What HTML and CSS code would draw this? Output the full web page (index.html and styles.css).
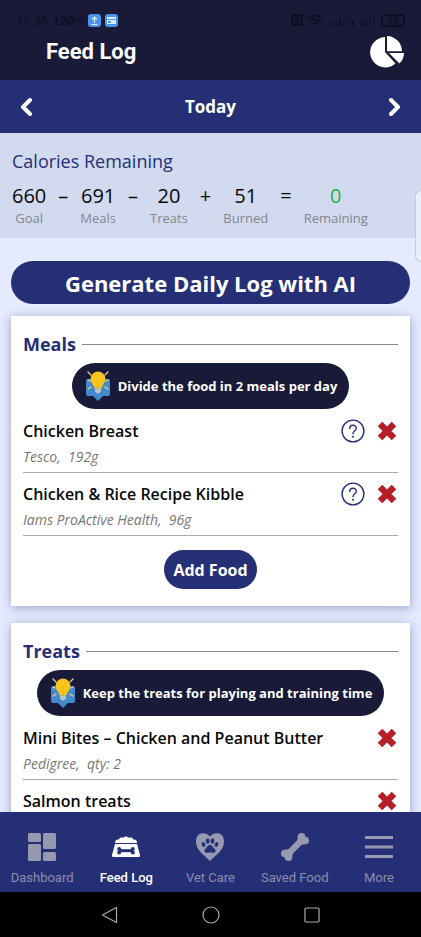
FILE: index.html
```html
<!DOCTYPE html>
<html lang="en">
<head>
<meta charset="utf-8">
<meta name="viewport" content="width=device-width, initial-scale=1">
<title>Feed Log</title>
<link rel="stylesheet" href="styles.css">
</head>
<body>
<svg class="defs" aria-hidden="true">
  <symbol id="tip" viewBox="0 0 28 32">
    <path fill="#4389cb" d="M4 9h20a2 2 0 0 1 2 2v13a2 2 0 0 1-2 2h-5l-5 5-5-5H4a2 2 0 0 1-2-2V11a2 2 0 0 1 2-2z"/>
    <path stroke="#ead89a" stroke-width="1.200" stroke-linecap="round" d="M4 2l3 3M24 2l-3 3M4 10l2 1M24 10l-2 1M4 19l3-2M24 19l-3-2"/>
    <path fill="#f9c51b" d="M14 1.500a7.500 7.500 0 0 0-7.500 7.500c0 4 3.500 5.500 4 9.500h7c.5-4 4-5.500 4-9.500a7.500 7.500 0 0 0-7.500-7.500z"/>
    <path fill="#eeb010" d="M13.500 10h1v8h-1z"/>
    <path fill="#b7c4c4" d="M11 18.500h6v3l-2 2h-2l-2-2z"/>
  </symbol>
  <symbol id="cross" viewBox="0 0 20 20">
    <path fill="none" stroke="#b71f28" stroke-width="6.400" stroke-linejoin="round" d="M3 3l14 14M17 3L3 17"/>
  </symbol>
  <symbol id="help" viewBox="0 0 24 24">
    <g fill="none" stroke="#252f75" stroke-width="1.400" stroke-linecap="round"><circle cx="12" cy="12" r="10.900"/><path d="M8.700 9.500c0-4.300 6.600-4.200 6.600-.2 0 2.600-3.300 2.500-3.300 5.500"/></g>
    <circle cx="12" cy="17.700" r="1" fill="#252f75"/>
  </symbol>
</svg>

<header class="top">
  <div class="status">
    <div class="status-side">
      <span>16:36</span><span class="rate">120<span class="hz">Hz</span></span>
      <svg width="13" height="13" viewBox="0 0 13 13"><rect width="13" height="13" rx="3" fill="#4d93ee"/><path d="M6.500 9V3M4 5.500L6.500 3 9 5.500M3.500 10.500h6" fill="none" stroke="#d9f0ff" stroke-width="1.200"/></svg>
      <svg width="13" height="13" viewBox="0 0 13 13"><rect width="13" height="13" rx="3" fill="#4d93ee"/><path d="M2 3h9v2H2zM2 6h9v4H2z" fill="#d9f0ff"/><path d="M3 7h3v2H3z" fill="#4d93ee"/></svg>
    </div>
    <div class="status-side">
      <svg width="12" height="12" viewBox="0 0 12 12"><rect width="12" height="12" rx="2" fill="#0d0e24"/><path d="M3 10V3l6 6V2" fill="none" stroke="#181a38" stroke-width="1.300"/></svg>
      <svg width="16" height="12" viewBox="0 0 16 12"><g fill="none" stroke="#0d0e24" stroke-width="1.600"><path d="M1 4.500q7-6 14 0M3.500 7.300q4.500-4 9 0M6 9.800q2-2 4 0"/></g><circle cx="8" cy="11" r="1" fill="#0d0e24"/></svg>
      <svg width="29" height="12" viewBox="0 0 29 12"><path fill="#0d0e24" d="M4 9h2v3H4zM8 7h2v5H8zM12 4h2v8h-2zM24 7h3v5h-3z"/><path fill="#121430" d="M16 2h2v10h-2zM20 0h1v12h-1z"/></svg>
      <svg width="17" height="12" viewBox="0 0 17 12"><path fill="#0d0e24" d="M1 9h2v3H1zM5 7h2v5H5z"/><path fill="#121430" d="M9 4h2v8H9zM13 0h2v12h-2z"/></svg>
      <span class="battery">59</span>
    </div>
  </div>
  <div class="title-row">
    <h1>Feed Log</h1>
    <button class="plain" aria-label="Nutrition chart">
      <svg width="36" height="32" viewBox="0 0 36 32"><path fill="#fff" d="M16 16V1A15.200 15.200 0 1 0 26.500 27.500zM18 0a15.500 15.500 0 0 1 15 15.200H18zM20 17h15a15 15 0 0 1-4.500 10.500z"/></svg>
    </button>
  </div>
</header>

<nav class="date" aria-label="Day">
  <button class="plain" aria-label="Previous day"><svg width="12" height="20" viewBox="0 0 12 20"><path d="M10 3L3 10l7 7"/></svg></button>
  <h2>Today</h2>
  <button class="plain" aria-label="Next day"><svg width="12" height="20" viewBox="0 0 12 20"><path d="M2 3l7 7-7 7"/></svg></button>
</nav>

<main>
  <section class="summary">
    <h2>Calories Remaining</h2>
    <div class="sum">
      <div class="term"><b>660</b><span>Goal</span></div>
      <i>–</i>
      <div class="term"><b>691</b><span>Meals</span></div>
      <i>–</i>
      <div class="term"><b>20</b><span>Treats</span></div>
      <i>+</i>
      <div class="term"><b>51</b><span>Burned</span></div>
      <i>=</i>
      <div class="term result"><b>0</b><span>Remaining</span></div>
    </div>
    <div class="edge"></div>
  </section>

  <div class="content">
    <button class="generate">Generate Daily Log with AI</button>

    <section class="card">
      <h2>Meals</h2>
      <p class="tip"><svg width="28" height="32"><use href="#tip"/></svg>Divide the food in 2 meals per day</p>
      <ul>
        <li>
          <div class="row"><h3>Chicken Breast</h3><button class="plain" aria-label="About Chicken Breast"><svg width="24" height="24"><use href="#help"/></svg></button><button class="plain" aria-label="Remove Chicken Breast"><svg width="20" height="20"><use href="#cross"/></svg></button></div>
          <p class="detail">Tesco,&nbsp; 192g</p>
        </li>
        <li>
          <div class="row"><h3>Chicken &amp; Rice Recipe Kibble</h3><button class="plain" aria-label="About Chicken &amp; Rice Recipe Kibble"><svg width="24" height="24"><use href="#help"/></svg></button><button class="plain" aria-label="Remove Chicken &amp; Rice Recipe Kibble"><svg width="20" height="20"><use href="#cross"/></svg></button></div>
          <p class="detail">Iams ProActive Health,&nbsp; 96g</p>
        </li>
      </ul>
      <button class="add">Add Food</button>
    </section>

    <section class="card">
      <h2>Treats</h2>
      <p class="tip"><svg width="28" height="32"><use href="#tip"/></svg>Keep the treats for playing and training time</p>
      <ul>
        <li>
          <div class="row"><h3>Mini Bites – Chicken and Peanut Butter</h3><button class="plain" aria-label="Remove Mini Bites"><svg width="20" height="20"><use href="#cross"/></svg></button></div>
          <p class="detail">Pedigree,&nbsp; qty: 2</p>
        </li>
        <li>
          <div class="row"><h3>Salmon treats</h3><button class="plain" aria-label="Remove Salmon treats"><svg width="20" height="20"><use href="#cross"/></svg></button></div>
        </li>
      </ul>
    </section>
  </div>
</main>

<nav class="tabs" aria-label="Main">
  <a href="#dashboard"><svg width="30" height="30" viewBox="0 0 30 30"><rect x="1" y="1" width="13" height="9" rx="1.500"/><rect x="1" y="12" width="13" height="17" rx="1.500"/><rect x="16" y="1" width="13" height="16" rx="1.500"/><rect x="16" y="20" width="13" height="9" rx="1.500"/></svg>Dashboard</a>
  <a href="#feed" class="active" aria-current="page"><svg width="30" height="30" viewBox="0 0 30 30"><path d="M4 11c0-3 2-4 4-3.500C8.500 5.500 11 5 12 6c1-2 5-2 6 0 1.500-1 4-.5 4 1.500 3-.5 4 1 4 3.500z"/><path d="M4 12h22l3 11c.3 1.500-.5 2-1.500 2h-25C1.500 25 .7 24.500 1 23z"/><g fill="#252f75"><path d="M8 17.200h14v3H8z"/><circle cx="8.200" cy="17" r="2"/><circle cx="8.200" cy="20.400" r="2"/><circle cx="21.800" cy="17" r="2"/><circle cx="21.800" cy="20.400" r="2"/></g></svg>Feed Log</a>
  <a href="#vet"><svg width="30" height="30" viewBox="0 0 30 30"><path d="M15 4.500C11-.5 1-.5 1 9.500 1 18 8 22 15 29c7-7 14-11 14-19.500 0-10-10-10-14-5z"/><g fill="#252f75"><ellipse cx="8.500" cy="12.500" rx="1.800" ry="2.500" transform="rotate(-20 8.500 12.500)"/><ellipse cx="12.700" cy="9" rx="1.900" ry="2.700"/><ellipse cx="17.500" cy="9" rx="1.900" ry="2.700"/><ellipse cx="21.500" cy="12.500" rx="1.800" ry="2.500" transform="rotate(20 21.500 12.500)"/><path d="M15 13c-2.500 0-3 2.700-4.800 4-2 2 0 4.500 2.300 3.800 1.800-.5 3.200-.5 5 0 2.300.7 4.300-1.800 2.300-3.800C18 15.700 17.500 13 15 13z"/></g></svg>Vet Care</a>
  <a href="#saved"><svg width="30" height="30" viewBox="0 0 30 30"><path d="M7.500 18L18 7.500l4.500 4.500L12 22.500z"/><circle cx="21.500" cy="4.800" r="3.800"/><circle cx="25.200" cy="8.500" r="3.800"/><circle cx="4.800" cy="21.500" r="3.800"/><circle cx="8.500" cy="25.200" r="3.800"/><path d="M18 4l8 8-6 1-3-3zM4 18l8 8 1-6-3-3z"/></svg>Saved Food</a>
  <a href="#more"><svg width="30" height="30" viewBox="0 0 30 30"><path d="M1 4h28v3H1zM1 13.500h28v3H1zM1 23h28v3H1z"/></svg>More</a>
</nav>

<div class="system">
  <button class="plain" aria-label="Back"><svg width="20" height="20" viewBox="0 0 20 20"><path d="M16.500 2.500v15L2.500 10z"/></svg></button>
  <button class="plain" aria-label="Home"><svg width="20" height="20" viewBox="0 0 20 20"><circle cx="10" cy="10" r="8"/></svg></button>
  <button class="plain" aria-label="Recent apps"><svg width="20" height="20" viewBox="0 0 20 20"><rect x="3" y="3" width="14" height="14" rx="1"/></svg></button>
</div>
</body>
</html>
```
FILE: styles.css
```css
* { box-sizing: border-box; margin: 0; padding: 0; }

:root {
  --navy: #181a38;
  --blue: #252f75;
}

body {
  display: flex;
  flex-direction: column;
  height: 100vh;
  background: #e5eaff;
  color: #080808;
  font-family: "Open Sans", "Noto Sans", sans-serif;
  overflow: hidden;
}

svg { display: block; flex: none; }
.defs { position: absolute; width: 0; height: 0; }
button { font: inherit; border: 0; cursor: pointer; }
.plain { background: none; flex: none; }
ul { list-style: none; }

.top {
  flex: none;
  height: 80px;
  padding: 12px 16px 0;
  background: var(--navy);
  font-family: Roboto, sans-serif;
}
.status {
  display: flex;
  justify-content: space-between;
  height: 16px;
  color: #0d0e24;
  font-size: 13px;
}
.status-side { display: flex; align-items: center; gap: 4px; }
.rate { display: flex; align-items: center; font-weight: 700; font-style: italic; }
.hz { font-size: 8px; }
.battery {
  width: 24px;
  border: 2px solid #0d0e24;
  border-radius: 4px;
  font-size: 10px;
  font-weight: 700;
  line-height: 9px;
  text-align: center;
}
.title-row {
  display: flex;
  align-items: center;
  justify-content: space-between;
  height: 48px;
  padding-left: 30px;
}
.title-row h1 { color: #fff; font-size: 22px; font-weight: 700; line-height: 28px; }

.date {
  flex: none;
  display: flex;
  align-items: center;
  justify-content: space-between;
  height: 53px;
  padding: 0 20px;
  background: var(--blue);
  color: #fff;
}
.date h2 { font-size: 17px; font-weight: 700; line-height: 24px; }
.date path { fill: none; stroke: #fff; stroke-width: 4; stroke-linecap: round; stroke-linejoin: round; }

main { flex: 1; min-height: 0; overflow: auto; scrollbar-width: none; }

.summary { position: relative; padding: 14px 12px 10px; background: #d1daef; }
.summary h2 { color: var(--blue); font-size: 18px; font-weight: 500; line-height: 28px; }
.sum { display: flex; gap: 12px; padding-top: 9px; }
.term { display: flex; flex-direction: column; align-items: center; }
.term b, .sum i { font-size: 20px; font-style: normal; font-weight: 500; line-height: 24px; }
.term span { color: #85878f; font-size: 13px; font-weight: 500; line-height: 20px; }
.result b { color: #28b244; }
.edge {
  position: absolute;
  top: 57px;
  right: 0;
  width: 6px;
  height: 72px;
  border: 1px solid #c5cadb;
  border-right: 0;
  border-radius: 8px 0 0 8px;
  background: #e9eefb;
}

.content { display: flex; flex-direction: column; gap: 17px; padding: 23px 11px; }
.generate {
  height: 43px;
  margin-bottom: -5px;
  border-radius: 22px;
  background: var(--blue);
  color: #fff;
  font-size: 22px;
  font-weight: 700;
}
.card {
  display: flex;
  flex-direction: column;
  padding: 16px 12px 17px;
  background: #fff;
  box-shadow: 0 2px 10px rgba(50, 60, 110, 0.4);
}
.card h2 {
  display: flex;
  align-items: center;
  gap: 6px;
  color: var(--blue);
  font-size: 18px;
  font-weight: 700;
  line-height: 24px;
}
.card h2::after { content: ""; flex: 1; height: 1px; background: #888; }
.tip {
  display: flex;
  align-items: center;
  align-self: center;
  gap: 6px;
  height: 46px;
  margin-top: 7px;
  margin-bottom: 1px;
  padding: 0 12px;
  border-radius: 23px;
  background: var(--navy);
  color: #fff;
  font-size: 13px;
  font-weight: 700;
  white-space: nowrap;
}
.card li { padding: 9px 0 5px; border-bottom: 1px solid #aaa; }
.row { display: flex; align-items: center; gap: 12px; height: 24px; padding-right: 1px; }
.row h3 { flex: 1; font-size: 16px; font-weight: 600; line-height: 24px; white-space: nowrap; }
.detail { padding-top: 4px; color: #777; font-size: 14px; font-style: italic; line-height: 20px; }
.add {
  align-self: center;
  height: 39px;
  margin-top: 14px;
  padding: 0 9px;
  border-radius: 20px;
  background: var(--blue);
  color: #fff;
  font-size: 16px;
  font-weight: 700;
}

.tabs {
  flex: none;
  display: grid;
  grid-template-columns: repeat(5, 1fr);
  height: 80px;
  padding-top: 20px;
  background: var(--blue);
  font-family: Roboto, sans-serif;
}
.tabs a {
  display: flex;
  flex-direction: column;
  align-items: center;
  gap: 8px;
  color: #8b8daa;
  font-size: 13px;
  line-height: 16px;
  text-decoration: none;
  white-space: nowrap;
}
.tabs svg { fill: #9799b0; }
.tabs .active { color: #fff; font-weight: 500; }
.tabs .active svg { fill: #fff; }

.system {
  flex: none;
  display: flex;
  align-items: center;
  justify-content: center;
  gap: 81px;
  height: 45px;
  background: #000;
}
.system svg { fill: none; stroke: #aaa; stroke-width: 1.2; stroke-linejoin: round; }
```
